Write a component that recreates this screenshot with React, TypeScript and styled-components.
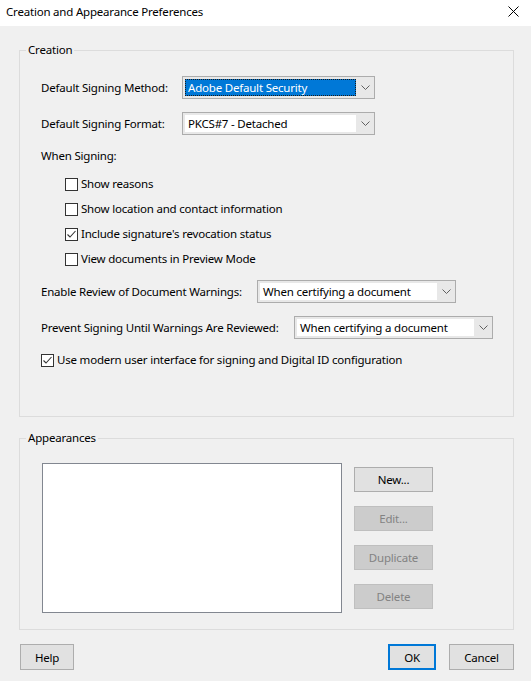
import React from "react";
import styled, { createGlobalStyle } from "styled-components";

const GlobalStyle = createGlobalStyle`
  html, body {
    margin: 0;
    padding: 0;
    background: #f0f0f0;
  }
  body {
    font-family: "Noto Sans", "Segoe UI", sans-serif;
    font-size: 11.5px;
    letter-spacing: -0.2px;
    color: #000;
  }
`;

const Window = styled.div`
  width: 531px;
  height: 681px;
  display: flex;
  flex-direction: column;
  background: #f0f0f0;
  overflow: hidden;
`;

const TitleBar = styled.div`
  height: 26px;
  flex-shrink: 0;
  background: #fff;
  display: flex;
  align-items: center;
  justify-content: space-between;
  padding: 0 12px 4px 6px;
  box-sizing: border-box;
`;

const Body = styled.div`
  display: flex;
  flex-direction: column;
  padding: 16px 17px 0 19px;
`;

const GroupBox = styled.fieldset<{ $height: number; $mt?: number }>`
  margin: ${(p) => p.$mt || 0}px 0 0 0;
  padding: 0;
  border: 1px solid #dcdcdc;
  height: ${(p) => p.$height}px;
  box-sizing: border-box;
  min-width: 0;
`;

const Legend = styled.legend`
  margin-left: 6px;
  padding: 0 2px;
  line-height: 16px;
`;

const CreationInner = styled.div`
  display: flex;
  flex-direction: column;
  gap: 13px;
  padding: 18px 0 0 21px;
`;

const Row = styled.div`
  display: flex;
  align-items: center;
  height: 23px;
`;

const FieldLabel = styled.span<{ $width: number }>`
  width: ${(p) => p.$width}px;
  flex-shrink: 0;
  line-height: 16px;
  white-space: nowrap;
`;

const Combo = styled.div<{ $width: number }>`
  width: ${(p) => p.$width}px;
  height: 23px;
  box-sizing: border-box;
  border: 1px solid #acacac;
  background: #e8e8e8;
  display: flex;
`;

const ComboValue = styled.div<{ $selected?: boolean }>`
  flex: 1;
  margin: 2px 0 2px 2px;
  padding-left: 3px;
  line-height: 17px;
  background: ${(p) => (p.$selected ? "#0078d7" : "#fff")};
  color: ${(p) => (p.$selected ? "#fff" : "#000")};
  outline: ${(p) => (p.$selected ? "1px dotted #1a1a1a" : "none")};
  outline-offset: -1px;
  white-space: nowrap;
  overflow: hidden;
`;

const ComboArrow = styled.div`
  width: 18px;
  display: flex;
  align-items: center;
  justify-content: center;
`;

const Section = styled.div`
  display: flex;
  flex-direction: column;
  gap: 12px;
`;

const SectionLabel = styled.div`
  line-height: 16px;
`;

const CheckList = styled.div`
  display: flex;
  flex-direction: column;
  gap: 9px;
  padding-left: 24px;
`;

const CheckRow = styled.label`
  display: flex;
  align-items: center;
  gap: 3px;
  height: 16px;
  line-height: 16px;
  white-space: nowrap;
`;

const Box = styled.span`
  width: 13px;
  height: 13px;
  box-sizing: border-box;
  border: 1px solid #333;
  background: #fff;
  display: flex;
  align-items: center;
  justify-content: center;
  flex-shrink: 0;
`;

const AppearInner = styled.div`
  display: flex;
  gap: 12px;
  padding: 17px 0 0 22px;
`;

const ListBox = styled.div`
  width: 300px;
  height: 150px;
  box-sizing: border-box;
  border: 1px solid #828790;
  background: #fff;
`;

const ButtonColumn = styled.div`
  display: flex;
  flex-direction: column;
  gap: 14px;
  margin-top: 4px;
`;

type Variant = "normal" | "primary" | "disabled";

const Button = styled.button<{ $width: number; $height?: number; $variant?: Variant }>`
  width: ${(p) => p.$width}px;
  height: ${(p) => p.$height || 25}px;
  box-sizing: border-box;
  padding: 0;
  font-family: inherit;
  font-size: inherit;
  letter-spacing: inherit;
  background: ${(p) => (p.$variant === "disabled" ? "#cccccc" : "#e1e1e1")};
  color: ${(p) => (p.$variant === "disabled" ? "#838383" : "#000")};
  border: ${(p) =>
    p.$variant === "primary"
      ? "2px solid #0078d7"
      : p.$variant === "disabled"
      ? "1px solid #bfbfbf"
      : "1px solid #adadad"};
`;

const Footer = styled.div`
  display: flex;
  justify-content: space-between;
  margin-top: 14px;
  padding-left: 1px;
`;

const FooterRight = styled.div`
  display: flex;
  gap: 13px;
`;

const Chevron = () => (
  <svg width="9" height="5" viewBox="0 0 9 5">
    <path d="M0.5 0.5 L4.5 4.5 L8.5 0.5" fill="none" stroke="#606060" strokeWidth="1" />
  </svg>
);

const CloseIcon = () => (
  <svg width="11" height="11" viewBox="0 0 11 11">
    <path d="M0.5 0.5 L10.5 10.5 M10.5 0.5 L0.5 10.5" stroke="#000" strokeWidth="1" />
  </svg>
);

const CheckMark = () => (
  <svg width="11" height="11" viewBox="0 0 11 11">
    <path d="M1.5 5.5 L4 8 L9.5 2" fill="none" stroke="#333" strokeWidth="1.1" />
  </svg>
);

const Select = ({ width, value, selected }: { width: number; value: string; selected?: boolean }) => (
  <Combo $width={width}>
    <ComboValue $selected={selected}>{value}</ComboValue>
    <ComboArrow>
      <Chevron />
    </ComboArrow>
  </Combo>
);

const Check = ({ label, checked }: { label: string; checked?: boolean }) => (
  <CheckRow>
    <Box>{checked && <CheckMark />}</Box>
    {label}
  </CheckRow>
);

const App = () => {
  return (
    <Window>
      <GlobalStyle />
      <TitleBar>
        <span>Creation and Appearance Preferences</span>
        <CloseIcon />
      </TitleBar>
      <Body>
        <GroupBox $height={375}>
          <Legend>Creation</Legend>
          <CreationInner>
            <Row>
              <FieldLabel $width={141}>Default Signing Method:</FieldLabel>
              <Select width={193} value="Adobe Default Security" selected />
            </Row>
            <Row>
              <FieldLabel $width={141}>Default Signing Format:</FieldLabel>
              <Select width={193} value="PKCS#7 - Detached" />
            </Row>
            <Section>
              <SectionLabel>When Signing:</SectionLabel>
              <CheckList>
                <Check label="Show reasons" />
                <Check label="Show location and contact information" />
                <Check label="Include signature's revocation status" checked />
                <Check label="View documents in Preview Mode" />
              </CheckList>
            </Section>
            <Row>
              <FieldLabel $width={216}>Enable Review of Document Warnings:</FieldLabel>
              <Select width={199} value="When certifying a document" />
            </Row>
            <Row>
              <FieldLabel $width={253}>Prevent Signing Until Warnings Are Reviewed:</FieldLabel>
              <Select width={199} value="When certifying a document" />
            </Row>
            <Check label="Use modern user interface for signing and Digital ID configuration" checked />
          </CreationInner>
        </GroupBox>
        <GroupBox $height={200} $mt={13}>
          <Legend>Appearances</Legend>
          <AppearInner>
            <ListBox />
            <ButtonColumn>
              <Button $width={79}>New...</Button>
              <Button $width={79} $variant="disabled">Edit...</Button>
              <Button $width={79} $variant="disabled">Duplicate</Button>
              <Button $width={79} $variant="disabled">Delete</Button>
            </ButtonColumn>
          </AppearInner>
        </GroupBox>
        <Footer>
          <Button $width={54} $height={26}>Help</Button>
          <FooterRight>
            <Button $width={48} $height={26} $variant="primary">OK</Button>
            <Button $width={65} $height={26}>Cancel</Button>
          </FooterRight>
        </Footer>
      </Body>
    </Window>
  );
};

export default App;
